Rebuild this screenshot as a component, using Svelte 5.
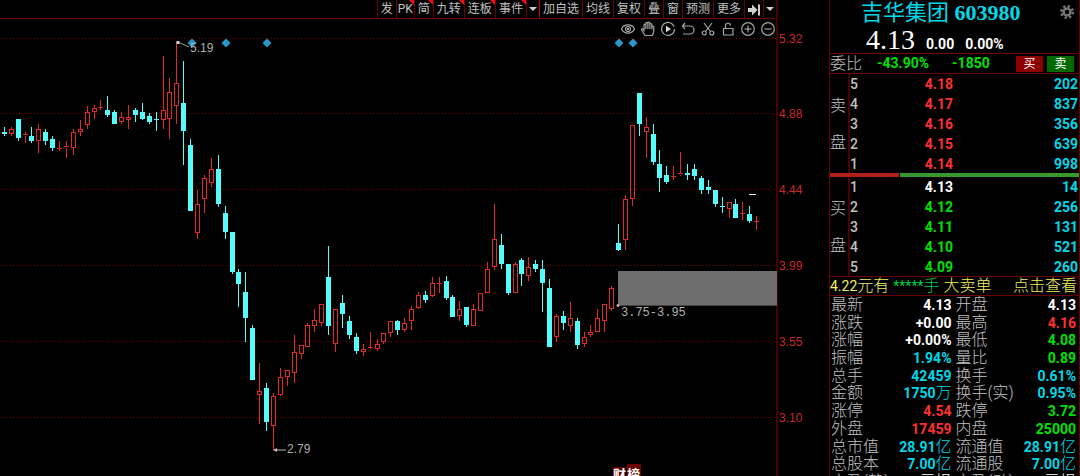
<script>
  const tools = [
    { label: '发' },
    { label: 'PK', flag: true, slim: true },
    { label: '简', flag: true },
    { label: '九转', flag: true },
    { label: '连板', flag: true },
    { label: '事件', flag: true },
    { icon: 'down', name: '更多事件' },
    { label: '加自选', bright: true },
    { label: '均线' },
    { label: '复权' },
    { label: '叠' },
    { label: '窗' },
    { label: '预测' },
    { label: '更多' },
    { icon: 'end', name: '移到最新' },
    { icon: 'down', name: '展开菜单' }
  ];

  const drawTools = [
    { name: '显示', kind: 'eye' },
    { name: '平移', kind: 'hand' },
    { name: '回放', kind: 'play' },
    { name: '撤销', kind: 'undo' },
    { name: '剪切', kind: 'cut' },
    { name: '锁定', kind: 'lock' },
    { name: '放大', kind: 'plus' },
    { name: '缩小', kind: 'minus' }
  ];

  const axis = [
    ['5.32', 39], ['4.88', 114], ['4.44', 190], ['3.99', 266], ['3.55', 342], ['3.10', 418]
  ];
  const diamonds = [[192, 43], [226, 43], [267, 43], [619, 43], [633, 43]];

  // One entry per bar: direction, high, body top, body bottom, low
  const series = `c 127 132 134 136|r 127 129 134 136|c 119 119 138 141|r 132 134 136 143|c 127 136 141 143|r 124 129 141 153|c 129 132 141 145|c 136 139 148 151|r 141 148 149 151|r 141 146 148 158|r 129 132 148 155|r 120 129 132 136|r 106 112 125 129|r 105 108 112 119|r 100 107 108 110|c 96 110 115 117|c 110 112 124 124|r 112 117 122 124|r 105 117 120 129|c 108 110 115 122|c 103 112 119 120|c 113 116 122 124|c 112 119 120 131|r 56 110 120 129|r 78 92 119 139|r 42 83 106 124|c 61 103 131 165|c 139 145 211 211|r 190 204 233 239|r 175 178 199 213|r 158 169 183 187|c 155 169 204 207|c 206 213 232 239|c 232 232 272 274|c 269 272 284 307|c 272 292 318 342|c 325 328 380 380|r 363 391 395 424|c 383 388 422 431|r 393 396 426 450|r 368 377 395 396|r 370 370 377 386|r 335 352 373 383|r 345 345 354 359|r 323 325 347 347|r 309 320 326 332|r 304 304 323 326|c 246 277 326 335|r 309 309 344 352|c 295 303 314 328|c 316 321 335 339|c 333 337 351 354|r 344 349 352 356|r 332 347 348 349|r 339 344 349 351|r 333 333 342 344|r 321 321 333 337|c 320 321 330 335|r 318 323 330 332|r 306 309 321 330|r 292 295 308 309|c 291 295 300 303|r 277 283 296 297|r 277 283 284 293|c 276 281 298 300|c 295 297 317 317|r 301 309 316 321|c 307 307 325 327|r 304 309 326 326|r 293 293 311 311|r 262 269 293 293|r 204 239 267 270|c 234 245 264 269|c 264 264 293 295|r 262 264 293 293|c 258 260 274 286|r 257 267 276 281|c 260 264 269 272|c 260 269 283 312|c 279 288 347 347|r 314 316 337 342|c 311 316 323 330|r 302 318 326 332|c 318 321 345 349|r 332 337 344 347|r 325 332 335 337|r 309 318 332 332|r 304 304 321 332|r 286 288 309 311|c 224 243 250 251|r 195 199 240 250|r 125 125 199 206|c 93 93 124 136|r 117 127 132 158|c 124 134 162 165|c 150 164 178 192|c 166 175 182 184|r 166 176 177 180|r 152 173 175 176|c 164 173 175 180|c 164 169 176 180|c 176 178 190 194|c 180 187 190 194|c 190 190 204 207|c 197 206 207 213|r 202 202 209 218|c 199 204 218 218|r 202 213 214 220|c 206 214 221 223|r 216 221 222 230`;
  const candles = series.split('|').map((row, i) => {
    const [dir, high, top, bottom, low] = row.split(' ');
    return { up: dir === 'r', x: Math.floor(4.3 + i * 6.902), high: +high, top: +top, bottom: +bottom, low: +low };
  });

  const asks = [['5', '4.18', '202'], ['4', '4.17', '837'], ['3', '4.16', '356'], ['2', '4.15', '639'], ['1', '4.14', '998']];
  const bids = [['1', '4.13', '14'], ['2', '4.12', '256'], ['3', '4.11', '131'], ['4', '4.10', '521'], ['5', '4.09', '260']];
  const books = [
    { side: '卖', rows: asks, tone: () => 'red' },
    { side: '买', rows: bids, tone: (i) => (i === 0 ? 'white' : 'green') }
  ];

  // label, number, unit, tone for both columns
  const stats = [
    ['最新', '4.13', '', 'white', '开盘', '4.13', '', 'white'],
    ['涨跌', '+0.00', '', 'white', '最高', '4.16', '', 'red'],
    ['涨幅', '+0.00%', '', 'white', '最低', '4.08', '', 'green'],
    ['振幅', '1.94%', '', 'cyan', '量比', '0.89', '', 'green'],
    ['总手', '42459', '', 'cyan', '换手', '0.61%', '', 'cyan'],
    ['金额', '1750', '万', 'cyan', '换手(实)', '0.95%', '', 'cyan'],
    ['涨停', '4.54', '', 'red', '跌停', '3.72', '', 'green'],
    ['外盘', '17459', '', 'red', '内盘', '25000', '', 'green'],
    ['总市值', '28.91', '亿', 'cyan', '流通值', '28.91', '亿', 'cyan'],
    ['总股本', '7.00', '亿', 'cyan', '流通股', '7.00', '亿', 'cyan'],
    ['市盈(静)', '', '亏损', 'white', '市盈(动)', '', '亏损', 'white']
  ];
</script>

<div class="app">
  <main class="main">
    <nav class="toolbar">
      {#each tools as t}
        <button class:slim={t.slim} class:arrow={t.icon === 'down'} class:bright={t.bright} aria-label={t.name}>
          {#if t.icon === 'down'}
            <svg width="8" height="4" viewBox="0 0 8 4"><path d="M0 0h8L4 4z" fill="#d0d0d0" /></svg>
          {:else if t.icon === 'end'}
            <svg width="12" height="12" viewBox="0 0 12 12" fill="#d0d0d0"><path d="M0 4h4V0.500l5.500 5.500-5.500 5.500V8H0zM10 0.500h2v11h-2z" /></svg>
          {:else}{t.label}{/if}
          {#if t.flag}<i class="flag"></i>{/if}
        </button>
      {/each}
    </nav>

    <div class="draw">
      {#each drawTools as d}
        <button aria-label={d.name}>
          <svg width="16" height="16" viewBox="0 0 16 16" fill="none" stroke="#a4a4a4" stroke-width="1.2">
            {#if d.kind === 'eye'}
              <path d="M1.500 8C4 2.500 12 2.500 14.500 8 12 13.500 4 13.500 1.500 8z" /><circle cx="8" cy="8" r="2.500" /><circle cx="8" cy="8" r=".6" />
            {:else if d.kind === 'hand'}
              <path d="M5 14.500C3.500 12 2 10 1.500 8.500c0-1.200 1.300-1 2.500.8V4c0-1.300 1.900-1.300 1.900 0V2.500c0-1.400 2-1.400 2 0V2c0-1.300 2-1.300 2 0v1.500c0-1.300 2-1.300 2 0V6c0-1.200 1.900-1.200 1.900 0v4c0 2-1 3-1.500 4.500zM5.900 4v4M7.900 2.500V8M9.900 3v5M11.900 5v3.500" />
            {:else if d.kind === 'play'}
              <path d="M12 2.800A6.500 6.500 0 1 0 14.500 8M14.300 5.500l-2.500-2.800M10 14.200a6.500 6.500 0 0 0 4.500-5.500" /><path d="M6 4.800L11 8l-5 3.200z" fill="#d8d8d8" stroke="none" />
            {:else if d.kind === 'undo'}
              <path d="M5 2L2.500 5 5 8M2.500 5H10a4 4 0 0 1 0 8H3" />
            {:else if d.kind === 'cut'}
              <path d="M4 2l6.500 8.500M12 2L5.500 10.500" /><circle cx="4.200" cy="12" r="2" /><circle cx="11.800" cy="12" r="2" />
            {:else if d.kind === 'lock'}
              <path d="M3.500 7.500h9.500V14H3.500zM5.500 7V4.500c0-3 5-3 5 0" />
            {:else}
              <circle cx="8" cy="8" r="6.300" /><path d="M4.500 8h7" />{#if d.kind === 'plus'}<path d="M8 4.500v7" />{/if}
            {/if}
          </svg>
        </button>
      {/each}
    </div>

    <svg class="chart" viewBox="0 39 829 437" role="img" aria-label="K线图">
      {#each axis as [label, y]}
        <line x1="1" x2="776" y1={y - 0.5} y2={y - 0.5} stroke="#780000" stroke-dasharray="1 2" />
        <text x="779" y={y + 4} class="tick">{label}</text>
      {/each}
      <line x1="777" x2="777" y1="39" y2="476" stroke="#480000" stroke-width="2" />

      {#each candles as c}
        {#if c.up}
          <g stroke="#e02a2a" fill="none">
            {#if c.high < c.top}<line x1={c.x + 0.5} x2={c.x + 0.5} y1={c.high} y2={c.top} />{/if}
            {#if c.low > c.bottom}<line x1={c.x + 0.5} x2={c.x + 0.5} y1={c.bottom} y2={c.low} />{/if}
            {#if c.bottom - c.top < 3}
              <line x1={c.x - 2} x2={c.x + 3} y1={c.top + 0.5} y2={c.top + 0.5} />
            {:else}
              <rect x={c.x - 1.5} y={c.top + 0.5} width="4" height={c.bottom - c.top - 1} />
            {/if}
          </g>
        {:else}
          <g fill="#54fcfc">
            <rect x={c.x} y={c.high} width="1" height={c.low - c.high} />
            <rect x={c.x - 2} y={c.top} width="5" height={c.bottom - c.top} />
          </g>
        {/if}
      {/each}

      {#each diamonds as [x, y]}
        <path d="M{x} {y - 4.5}l4.500 4.500-4.500 4.500-4.500-4.500z" fill="#2899c8" />
      {/each}

      <rect x="176.500" y="41" width="3" height="3" fill="#ccc" />
      <path d="M179 42.500l10 4.500" stroke="#999" />
      <text x="190" y="52" class="note">5.19</text>
      <path d="M274 450h12" stroke="#bbb" />
      <path d="M273 450l4-2v4z" fill="#bbb" />
      <text x="287" y="453" class="note">2.79</text>

      <rect x="618" y="271" width="159" height="34" fill="#6e6e6e" />
      <rect x="618" y="305" width="159" height="1" fill="#444" />
      <circle cx="618" cy="305.500" r="1.500" fill="#dba0a0" />
      <text x="621" y="316" class="gap">3.75-3.95</text>
      <rect x="749" y="194" width="7" height="1" fill="#e8e8e8" />

      <rect x="613" y="467" width="12" height="10" fill="#6b0000" />
      <rect x="627" y="464" width="14" height="13" fill="#6b0000" />
      <text x="613" y="479" class="badge">财</text>
      <text x="627" y="479" class="badge">榜</text>
    </svg>
  </main>

  <aside class="panel">
    <header>
      <h1>吉华集团 <b>603980</b></h1>
      <button class="gear" aria-label="设置">
        <svg width="14" height="14" viewBox="0 0 14 14" fill="none" stroke="#777">
          <circle cx="7" cy="7" r="3.500" stroke-width="2.500" />
          <circle cx="7" cy="7" r="5.800" stroke-width="2.400" stroke-dasharray="2.280 2.280" />
        </svg>
      </button>
      <p class="quote"><strong>4.13</strong><span>0.00</span><span>0.00%</span></p>
    </header>

    <div class="ratio">
      <span class="cap">委比</span>
      <b class="pct">-43.90%</b>
      <b class="diff">-1850</b>
      <button class="buy">买</button>
      <button class="sell">卖</button>
    </div>

    {#each books as book, n}
      {#if n === 1}<div class="balance"><i></i><i></i></div>{/if}
      <section class="book">
        <div class="side"><span>{book.side}</span><span>盘</span></div>
        <table>
          <tbody>
            {#each book.rows as [lvl, price, vol], i}
              <tr><th scope="row">{lvl}</th><td class={book.tone(i)}>{price}</td><td class="cyan">{vol}</td></tr>
            {/each}
          </tbody>
        </table>
      </section>
    {/each}

    <div class="alert">
      <span><b>4.22</b>元有</span>
      <span class="lots"><b>*****</b>手</span>
      <span>大卖单</span>
      <a href="#detail">点击查看</a>
    </div>

    <table class="stats">
      <tbody>
        {#each stats as [l1, v1, u1, t1, l2, v2, u2, t2]}
          <tr>
            <th scope="row">{l1}</th><td class={t1}>{v1}<span>{u1}</span></td>
            <th scope="row">{l2}</th><td class={t2}>{v2}<span>{u2}</span></td>
          </tr>
        {/each}
      </tbody>
    </table>
  </aside>
</div>

<style>
  :global(body) { margin: 0; background: #000; }
  .app {
    display: flex;
    height: 100vh;
    overflow: hidden;
    background: #000;
    color: #c0c0c0;
    font-family: Roboto, "Noto Sans CJK SC", sans-serif;
    font-size: 14px;
  }
  button { padding: 0; border: 0; background: none; color: inherit; font-family: inherit; cursor: pointer; }
  .main { flex: 1; min-width: 0; }

  .toolbar, .draw { display: flex; justify-content: flex-end; margin-right: 51px; border-right: 2px solid #480000; }
  .toolbar { height: 18px; border-bottom: 1px solid #6a0000; }
  .toolbar button {
    position: relative;
    display: flex;
    align-items: center;
    justify-content: center;
    padding: 1px 3px 0;
    border-left: 1px solid #6a0000;
    font-size: 12px;
    line-height: 17px;
    white-space: nowrap;
  }
  .toolbar .slim { padding: 1px 1px 0; }
  .toolbar .arrow { padding: 0 2px; }
  .toolbar .bright { border-left-color: #c00000; }
  .flag { position: absolute; top: 0; right: 0; border-top: 5px solid #f01010; border-left: 5px solid transparent; }
  .draw { height: 20px; }
  .draw button { width: 20px; display: flex; align-items: center; justify-content: flex-end; }

  .chart { display: block; width: 100%; overflow: visible; }
  .tick { fill: #c82828; font: 12px "Liberation Sans", sans-serif; }
  .note { fill: #b0b0a8; font: 12px "Liberation Sans", sans-serif; }
  .gap { fill: #b0b0b0; font: 12px "Liberation Mono", monospace; }
  .badge { fill: #fff; font: bold 13px "Noto Sans CJK SC", sans-serif; }

  .panel { box-sizing: border-box; flex: 0 0 251px; border: solid #6a0000; border-width: 0 1px; }
  header { position: relative; height: 53px; border-bottom: 1px solid #6a0000; }
  h1 {
    margin: 0;
    padding-left: 31px;
    color: #00d8e8;
    font: 400 22px/25px "Liberation Serif", "Noto Sans CJK SC", serif;
    white-space: nowrap;
  }
  .gear { position: absolute; top: 5px; right: 5px; width: 14px; height: 14px; }
  .gear svg { display: block; }
  .quote { display: flex; align-items: baseline; margin: 0; padding-left: 36px; color: #fff; font-weight: 700; line-height: 30px; }
  .quote strong { font: 400 28px/30px "Liberation Serif", serif; }
  .quote span { margin-left: 11px; }

  .cap, .side, .stats th, .stats td span, .alert { font-size: 16px; font-weight: 300; }
  .ratio { display: flex; align-items: center; height: 19px; border-bottom: 1px solid #6a0000; line-height: 19px; }
  .ratio b { color: #00e000; }
  .pct { margin-left: 15px; }
  .diff { flex: 1; margin-left: 23px; }
  .buy, .sell { width: 27px; height: 16px; border-radius: 1px; color: #fff; font-size: 12px; line-height: 16px; }
  .buy { background: #8b0000; }
  .sell { margin: 0 5px 0 4px; background: #006a00; }

  .book { display: flex; height: 99px; }
  .side {
    display: flex;
    flex-direction: column;
    justify-content: space-around;
    box-sizing: border-box;
    width: 20px;
    padding: 13px 0 11px;
    border-right: 2px solid #480000;
    line-height: 16px;
  }
  table { border-collapse: collapse; }
  th, td { padding: 0; line-height: 16px; }
  .book table { flex: 1; height: 99px; font-weight: 700; }
  .book th, .book td { padding-top: 1px; }
  .book th { width: 21px; text-align: left; font-weight: 500; }
  .book td { width: 82px; text-align: right; }
  .book td:last-child { width: auto; padding-right: 1px; }

  .balance { display: flex; gap: 1px; height: 4px; }
  .balance i { flex: 28; background: #b02018; }
  .balance i + i { flex: 72; background: #38982c; }

  .alert { display: flex; gap: 4px; height: 18px; border: solid #6a0000; border-width: 1px 0; padding-right: 2px; color: #f0f060; line-height: 18px; white-space: nowrap; }
  .alert b { font-size: 14px; }
  .alert a { margin-left: auto; color: inherit; text-decoration: none; }
  .alert .lots { color: #00d040; }

  .stats { width: 100%; height: 195px; table-layout: fixed; font-weight: 700; }
  .stats th { padding-left: 1px; text-align: left; white-space: nowrap; }
  .stats td { padding-right: 3px; text-align: right; white-space: nowrap; }
  .stats td span { line-height: 16px; }

  .white { color: #fff; }
  .red { color: #ff3030; }
  .green { color: #00e000; }
  .cyan { color: #00d8e8; }
</style>
